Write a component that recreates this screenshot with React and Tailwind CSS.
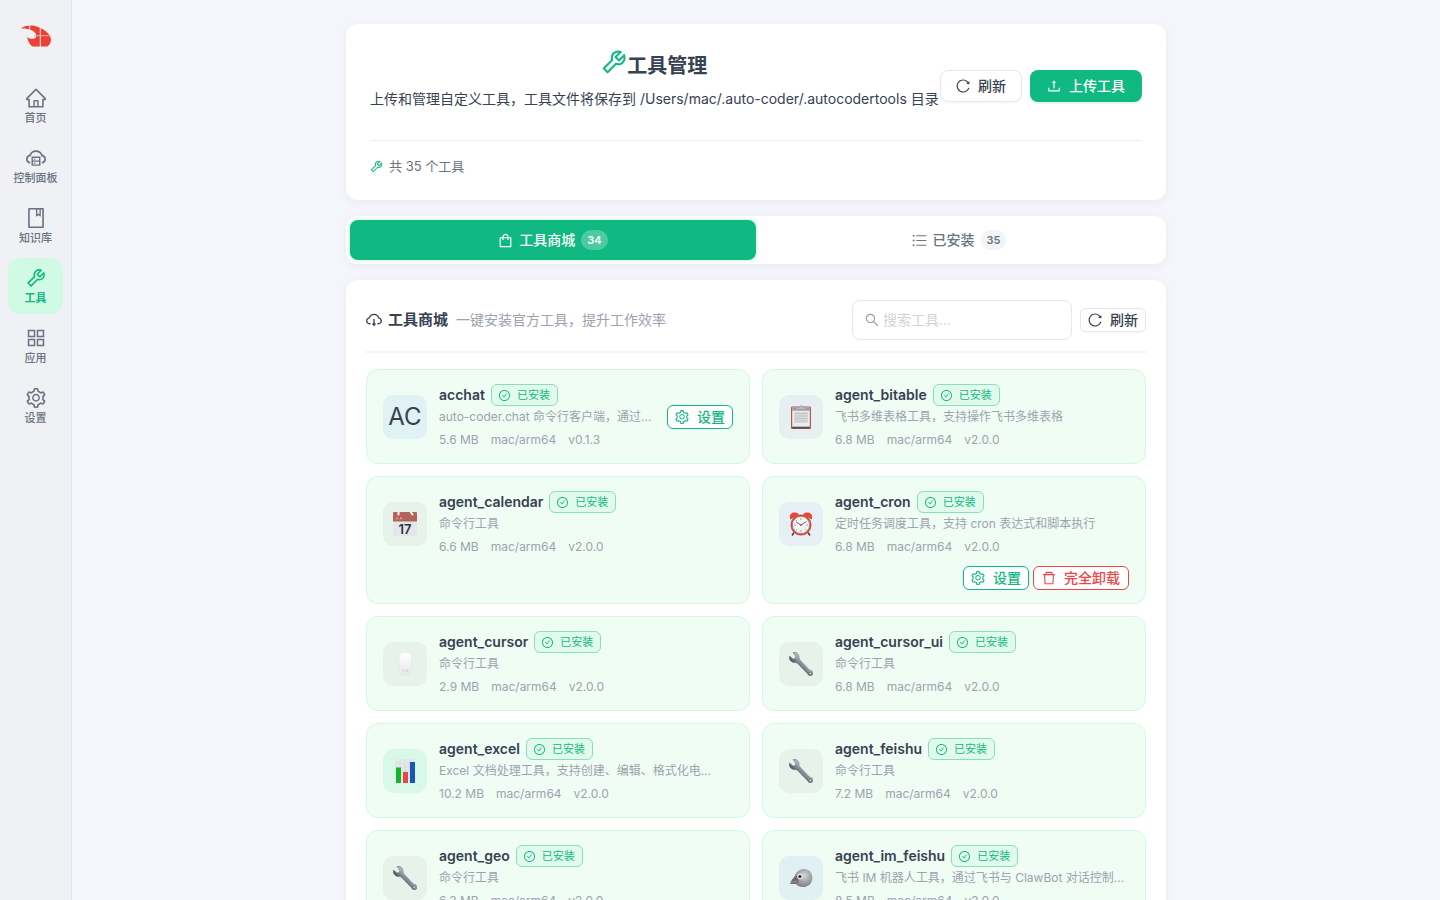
import {
  AiOutlineAppstore,
  AiOutlineBook,
  AiOutlineCheckCircle,
  AiOutlineCloudDownload,
  AiOutlineCloudServer,
  AiOutlineDelete,
  AiOutlineHome,
  AiOutlineReload,
  AiOutlineSearch,
  AiOutlineSetting,
  AiOutlineShopping,
  AiOutlineTool,
  AiOutlineUnorderedList,
  AiOutlineUpload,
} from "react-icons/ai";

const NAV = [
  { label: "首页", icon: AiOutlineHome },
  { label: "控制面板", icon: AiOutlineCloudServer },
  { label: "知识库", icon: AiOutlineBook },
  { label: "工具", icon: AiOutlineTool, active: true },
  { label: "应用", icon: AiOutlineAppstore },
  { label: "设置", icon: AiOutlineSetting },
];

const TOOLS = [
  { name: "acchat", desc: "auto-coder.chat 命令行客户端，通过...", size: "5.6 MB", version: "v0.1.3", art: "ac", settings: true },
  { name: "agent_bitable", desc: "飞书多维表格工具，支持操作飞书多维表格", size: "6.8 MB", version: "v2.0.0", art: "clipboard" },
  { name: "agent_calendar", desc: "命令行工具", size: "6.6 MB", version: "v2.0.0", art: "calendar" },
  { name: "agent_cron", desc: "定时任务调度工具，支持 cron 表达式和脚本执行", size: "6.8 MB", version: "v2.0.0", art: "clock", settings: true, removable: true },
  { name: "agent_cursor", desc: "命令行工具", size: "2.9 MB", version: "v2.0.0", art: "mouse" },
  { name: "agent_cursor_ui", desc: "命令行工具", size: "6.8 MB", version: "v2.0.0", art: "wrench" },
  { name: "agent_excel", desc: "Excel 文档处理工具，支持创建、编辑、格式化电...", size: "10.2 MB", version: "v2.0.0", art: "chart" },
  { name: "agent_feishu", desc: "命令行工具", size: "7.2 MB", version: "v2.0.0", art: "wrench" },
  { name: "agent_geo", desc: "命令行工具", size: "6.3 MB", version: "v2.0.0", art: "wrench" },
  { name: "agent_im_feishu", desc: "飞书 IM 机器人工具，通过飞书与 ClawBot 对话控制...", size: "8.5 MB", version: "v2.0.0", art: "bird" },
];

const ART_BG = {
  ac: "bg-[#e0f2f3]",
  clipboard: "bg-[#e6f0f3]",
  clock: "bg-[#e5eff4]",
  bird: "bg-[#e1f0f2]",
  chart: "bg-[#d9f9e8]",
  calendar: "bg-[#e7f2eb]",
  mouse: "bg-[#e7f2eb]",
  wrench: "bg-[#e7f2eb]",
};

/* Trims the blank margin of the outline icons so they fill their box. */
function Icon({ as: Glyph, className }) {
  return <Glyph viewBox="64 64 896 896" className={`shrink-0 ${className}`} aria-hidden="true" />;
}

function Clipboard() {
  return (
    <svg viewBox="0 0 24 24" className="size-6" aria-hidden="true">
      <rect x="2" y="1.500" width="20" height="22.500" rx="1" fill="#b9594e" />
      <rect x="3.200" y="2.500" width="17.600" height="20.500" fill="#ececed" />
      <rect x="3.200" y="2.500" width="17.600" height="3.200" fill="#9b9fa3" />
      <rect x="5" y="7" width="14" height="11" fill="#d6d8d9" />
      <path d="M6 8.500h12M6 11h12M6 13.500h12M6 16h12" stroke="#bcbfc2" strokeWidth="1.200" strokeDasharray="1.500 0.600" />
      <path d="M3.200 22.600h17.600" stroke="#4b5158" strokeWidth="1.800" />
      <path d="M7 4.500V2.600h3a2 2 0 0 1 4 0h3v1.900z" fill="#b6babd" stroke="#90959a" strokeWidth="0.500" />
    </svg>
  );
}

function Calendar() {
  return (
    <svg viewBox="0 0 24 24" className="size-6" aria-hidden="true">
      <rect width="24" height="24" rx="1" fill="#e3e6ea" />
      <path d="M0 9.500V1a1 1 0 0 1 1-1h22a1 1 0 0 1 1 1v8.500z" fill="#b4635a" />
      <path d="M5.500 0v2.500M18 .5l1.500 2" stroke="#fff" strokeWidth="2" strokeLinecap="round" />
      <path d="M3 7.500l1-2 1 2M7 7.500l1-2 1 2" stroke="#e0aaa5" strokeWidth="0.800" fill="none" />
      <text x="12" y="21.500" textAnchor="middle" fontSize="13" fontWeight="600" fontFamily="Inter, sans-serif" fill="#30343f">17</text>
    </svg>
  );
}

function Clock() {
  return (
    <svg viewBox="0 0 24 24" className="size-6" aria-hidden="true">
      <path d="M5 20.500l-2 3M19 20.500l2 3" stroke="#5b3a36" strokeWidth="1.500" />
      <path d="M1.500 7.500C-.5 4 2 .3 6 .5c2 .1 3.500 1 4 2zM22.500 7.500C24.500 4 22 .3 18 .5c-2 .1-3.500 1-4 2z" fill="#e5473a" />
      <circle cx="12" cy="13" r="9.700" fill="#f6f5f3" stroke="#d8453b" strokeWidth="1.600" />
      <circle cx="12" cy="13" r="8.600" fill="none" stroke="#6b6462" strokeWidth="0.700" />
      <path d="M12 6v2M12 18v2M5 13h2M17 13h2M7 8l1 1M17 18l-1-1M7 18l1-1" stroke="#9b9795" strokeWidth="0.900" />
      <path d="M7 10l5 3 5.500-3.500" stroke="#55585c" strokeWidth="0.900" fill="none" />
      <circle cx="12" cy="13" r="0.900" fill="#d64338" />
    </svg>
  );
}

function Mouse() {
  return (
    <svg viewBox="0 0 24 24" className="size-6" aria-hidden="true">
      <defs>
        <linearGradient id="mouse-body" x1="0" y1="0" x2="0" y2="1">
          <stop offset="0" stopColor="#ffffff" />
          <stop offset="1" stopColor="#e5e8ea" />
        </linearGradient>
      </defs>
      <rect x="6" y="0.500" width="12.500" height="23" rx="4.500" fill="url(#mouse-body)" stroke="#dfe4e5" strokeWidth="0.500" />
      <path d="M9 19.500l1-2 1 2M13 17.500h2v2h-2z" stroke="#ccd0d4" strokeWidth="0.600" fill="none" />
    </svg>
  );
}

function Wrench() {
  return (
    <svg viewBox="0 0 24 24" className="size-6" aria-hidden="true">
      <defs>
        <linearGradient id="wrench-steel" x1="0" y1="1" x2="1" y2="0">
          <stop offset="0.350" stopColor="#4d525c" />
          <stop offset="0.600" stopColor="#b1b5bb" />
        </linearGradient>
      </defs>
      <path
        d="M4 .6C6.600-.4 9.600 1.400 10 4.400c.2 1.500 0 2.600.5 3.200l9.800 10.300c.8.4 2 .5 2.800 1.300 1.400 1.400 1.100 3.600-.4 4.300-1.600.8-3.600-.1-4.200-1.800L8.400 11.200C7.600 10.400 6.700 10.800 5.200 10.600 2 10.200-.5 7.200.5 4.100l3.700 3 2.200-.7.400-2.300z"
        fill="url(#wrench-steel)"
        stroke="#5d626b"
        strokeWidth="0.500"
      />
      <path d="M10.500 9.500l8 8.700" stroke="#858a93" strokeWidth="0.900" />
      <circle cx="21.200" cy="21.400" r="1.200" fill="#e9f0ed" stroke="#444953" strokeWidth="0.600" />
    </svg>
  );
}

function Chart() {
  return (
    <svg viewBox="0 0 24 24" className="size-6" aria-hidden="true">
      <rect x="2" width="20" height="24" fill="#e4e9e9" />
      <path d="M2 4h20M2 8h20M2 12h20M2 16h20M2 20h20M7 0v24M12 0v24M17 0v24" stroke="#ced6d6" strokeWidth="0.500" />
      <rect x="3" y="8.500" width="5" height="15.500" fill="#16b32b" />
      <rect x="10" y="13" width="5" height="11" fill="#e6483d" />
      <rect x="17" y="3" width="5" height="21" fill="#1359bb" />
    </svg>
  );
}

function Bird() {
  return (
    <svg viewBox="0 0 24 24" className="size-6" aria-hidden="true">
      <defs>
        <radialGradient id="bird-head" cx="0.550" cy="0.350" r="0.700">
          <stop offset="0" stopColor="#d3d4d5" />
          <stop offset="1" stopColor="#777b7f" />
        </radialGradient>
      </defs>
      <path d="M5.500 10.500C7 5.500 11 3 15 3c5 0 8.300 3.800 8.300 8.700 0 5.500-3.800 9.300-9.300 9.300-3.500 0-6.300-1.400-7.300-3.500z" fill="url(#bird-head)" />
      <path d="M7.500 9.500C4.500 11 2 14.500 1 17.800c3 .5 6.500.2 8-1.300 1.200-2 .4-5.500-1.500-7z" fill="#676b70" />
      <path d="M2 16.600l6-1.600" stroke="#a5a8ab" strokeWidth="0.800" />
      <circle cx="11" cy="10.500" r="2.800" fill="#eceded" />
      <circle cx="10.900" cy="10.500" r="1.600" fill="#232629" />
    </svg>
  );
}

const ART = { clipboard: Clipboard, calendar: Calendar, clock: Clock, mouse: Mouse, wrench: Wrench, chart: Chart, bird: Bird };

function Logo() {
  return (
    <svg viewBox="0 0 30 22" className="h-[22px] w-[30px]" role="img" aria-label="auto-coder">
      <path
        d="M0 3.600C2 1.200 5.500.4 9.500.4 18.500.4 30 7.600 30 14.800c0 3-1.700 5.200-3.600 6.600H11.200C8.500 19 6.700 15.700 6.200 12c2.600 2.300 6.600 2.500 8.600.4 1.600-2.400-.8-6-5.300-7.600C6.500 3.700 3 3.100 0 3.600z"
        fill="#ea4335"
      />
      <path d="M8.600 0v5.500M19.300 0v22" stroke="#fbeeee" strokeWidth="1" />
      <path d="M13 10.700h17" stroke="#f3a49d" strokeWidth="1" />
    </svg>
  );
}

function Sidebar() {
  return (
    <aside className="flex w-[72px] shrink-0 flex-col items-center border-r border-[#e2e6ec] bg-[#eff1f5]">
      <a href="#" className="flex h-[78px] items-center pb-1.5">
        <Logo />
      </a>
      <nav className="flex w-full flex-col gap-1 px-2">
        {NAV.map(({ label, icon, active }) => (
          <a
            key={label}
            href="#"
            aria-current={active ? "page" : undefined}
            className={`flex h-14 flex-col items-center gap-0.5 rounded-xl pt-2.5 text-[11px] leading-4 whitespace-nowrap ${
              active ? "bg-[#d1fae5] font-semibold text-[#10b981]" : "font-medium text-[#6b7280]"
            }`}
          >
            <Icon as={icon} className="size-5" />
            {label}
          </a>
        ))}
      </nav>
    </aside>
  );
}

function HeaderCard() {
  return (
    <section className="rounded-xl bg-white p-6 shadow-[0_2px_12px_rgba(0,0,0,0.05)]">
      <div className="flex items-center justify-between border-b border-[#edeff1] pb-4">
        <div className="pb-3.5">
          <h1 className="flex h-9 justify-center text-xl leading-9 font-semibold text-[#374151]">
            <Icon as={AiOutlineTool} className="mt-px size-[26px] text-[#10b981]" />
            工具管理
          </h1>
          <p className="mt-1 text-sm leading-[22px] whitespace-nowrap">
            上传和管理自定义工具，工具文件将保存到 /Users/mac/.auto-coder/.autocodertools 目录
          </p>
        </div>
        <div className="flex shrink-0 gap-2">
          <button type="button" className="flex h-8 items-center gap-2 rounded-lg border border-[#e5e7eb] bg-white px-[15px] text-sm font-medium shadow-[0_2px_0_rgba(0,0,0,0.02)]">
            <Icon as={AiOutlineReload} className="size-3.5" />
            刷新
          </button>
          <button type="button" className="flex h-8 items-center gap-2 rounded-lg bg-[#10b981] px-[17px] text-sm font-medium text-white shadow-[0_2px_0_rgba(16,185,129,0.1)]">
            <Icon as={AiOutlineUpload} className="size-3.5" />
            上传工具
          </button>
        </div>
      </div>
      <p className="flex items-center gap-1.5 pt-4 text-[13px] leading-[19px] text-[#6b7280]">
        <Icon as={AiOutlineTool} className="size-[13px] text-[#10b981]" />
        共 35 个工具
      </p>
    </section>
  );
}

function Tabs() {
  return (
    <div role="tablist" className="grid grid-cols-2 rounded-xl bg-white p-1 shadow-[0_2px_12px_rgba(0,0,0,0.05)]">
      <button
        type="button"
        role="tab"
        aria-selected="true"
        className="flex h-10 items-center justify-center gap-1.5 rounded-lg bg-[#10b981] text-sm font-medium text-white shadow-[0_0_4px_rgba(16,185,129,0.3)]"
      >
        <Icon as={AiOutlineShopping} className="size-[15px]" />
        工具商城
        <span className="rounded-full bg-white/25 px-1.5 text-[11px] leading-5 font-semibold">34</span>
      </button>
      <button type="button" role="tab" aria-selected="false" className="flex h-10 items-center justify-center gap-1.5 rounded-lg text-sm font-medium text-[#6b7280]">
        <Icon as={AiOutlineUnorderedList} className="size-[15px]" />
        已安装
        <span className="rounded-full bg-[#f3f4f8] px-1.5 text-[11px] leading-5 font-semibold">35</span>
      </button>
    </div>
  );
}

function SettingsButton() {
  return (
    <button type="button" className="flex h-6 shrink-0 items-center gap-2 rounded-md border border-[#10b981] bg-white px-[7px] text-sm font-medium text-[#10b981]">
      <Icon as={AiOutlineSetting} className="size-3.5" />
      设置
    </button>
  );
}

function ToolCard({ tool }) {
  const Art = ART[tool.art];
  return (
    <article className="min-w-0 rounded-xl border border-[#d1fae5] bg-[#f0fdf4] px-4 py-[13px]">
      <div className="flex items-center gap-3">
        <div className={`flex size-11 shrink-0 items-center justify-center rounded-[10px] text-2xl ${ART_BG[tool.art]}`}>
          {Art ? <Art /> : "AC"}
        </div>
        <div className="min-w-0 flex-1">
          <div className="flex h-6 items-center gap-1.5">
            <h3 className="text-sm font-semibold">{tool.name}</h3>
            <span className="flex h-[22px] items-center gap-[7px] rounded-md border border-[#86e0b8] bg-[#e2faed] px-[7px] text-[11px] text-[#10b981]">
              <Icon as={AiOutlineCheckCircle} className="size-[11px]" />
              已安装
            </span>
          </div>
          <p className="truncate text-xs leading-5 text-[#9ca3af]">{tool.desc}</p>
          <p className="mt-0.5 flex gap-3 text-xs leading-[21px] text-[#9ca3af]">
            <span>{tool.size}</span>
            <span>mac/arm64</span>
            <span>{tool.version}</span>
          </p>
        </div>
        {tool.settings && !tool.removable && <SettingsButton />}
      </div>
      {tool.removable && (
        <div className="mt-[9px] flex justify-end gap-1">
          <SettingsButton />
          <button type="button" className="flex h-6 items-center gap-2 rounded-md border border-[#ef4444] bg-white px-2 text-sm font-medium text-[#ef4444]">
            <Icon as={AiOutlineDelete} className="size-3.5" />
            完全卸载
          </button>
        </div>
      )}
    </article>
  );
}

function StorePanel() {
  return (
    <section className="rounded-xl bg-white p-5 shadow-[0_2px_12px_rgba(0,0,0,0.05)]">
      <div className="mb-4 flex items-center justify-between border-b-2 border-[#f3f4f8] pb-[11px]">
        <div className="flex items-center">
          <Icon as={AiOutlineCloudDownload} className="size-4" />
          <h2 className="ml-1.5 text-[15px] font-semibold">工具商城</h2>
          <span className="ml-2 text-sm text-[#9ca3af]">一键安装官方工具，提升工作效率</span>
        </div>
        <div className="flex items-center gap-2">
          <label className="flex h-10 w-[220px] items-center gap-1 rounded-lg border border-[#e5e7eb] bg-white px-3 text-[#9ca3af]">
            <Icon as={AiOutlineSearch} className="size-3.5" />
            <input
              type="search"
              aria-label="搜索工具"
              placeholder="搜索工具..."
              className="min-w-0 flex-1 bg-transparent text-sm text-[#374151] outline-none placeholder:text-[#cfd4d9]"
            />
          </label>
          <button type="button" className="flex h-6 items-center gap-2 rounded-md border border-[#e5e7eb] bg-white px-[7px] text-sm font-medium shadow-[0_2px_0_rgba(0,0,0,0.02)]">
            <Icon as={AiOutlineReload} className="size-3.5" />
            刷新
          </button>
        </div>
      </div>
      <div className="grid grid-cols-2 gap-3">
        {TOOLS.map((tool) => (
          <ToolCard key={tool.name} tool={tool} />
        ))}
      </div>
    </section>
  );
}

export default function App() {
  return (
    <div className="flex h-screen bg-[#f4f6fb] font-['Inter','Noto_Sans_CJK_SC',sans-serif] text-[#374151]" lang="zh-CN">
      <Sidebar />
      <main className="min-w-0 flex-1 overflow-y-auto py-6 [scrollbar-width:none]">
        <div className="mx-auto flex max-w-[820px] flex-col gap-4">
          <HeaderCard />
          <Tabs />
          <StorePanel />
        </div>
      </main>
    </div>
  );
}
